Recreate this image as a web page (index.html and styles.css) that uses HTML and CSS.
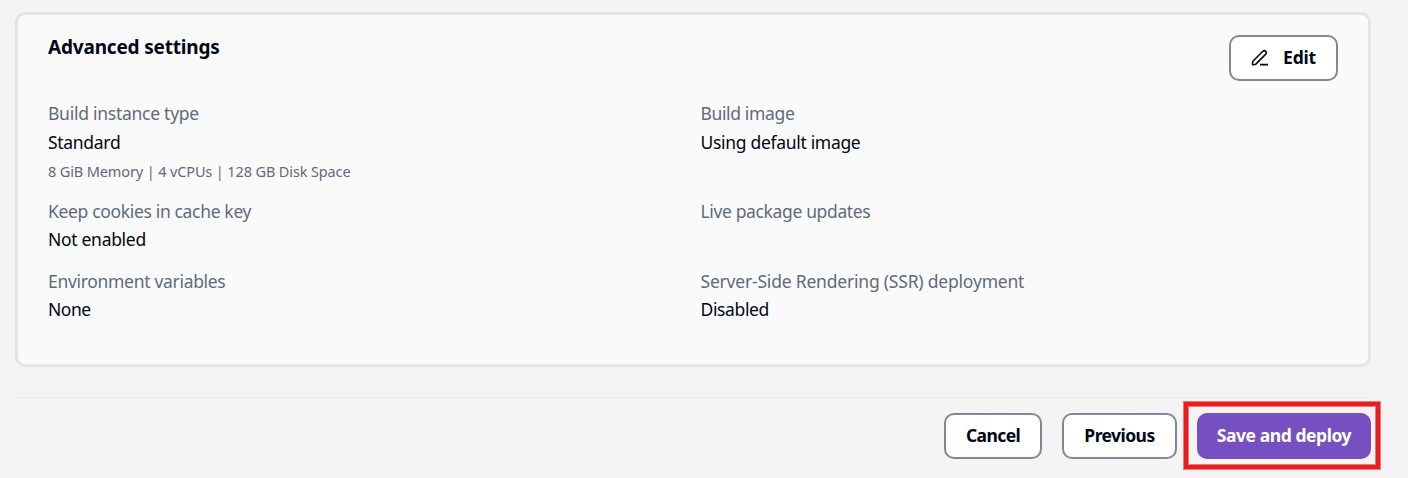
FILE: index.html
```html
<!DOCTYPE html>
<html lang="en">
<head>
<meta charset="utf-8">
<title>Review</title>
<link rel="stylesheet" href="styles.css">
</head>
<body>
<main class="page">
  <section class="card">
    <header class="card-header">
      <h2 class="title">Advanced settings</h2>
      <button class="button edit">
        <svg class="icon" width="18" height="18" viewBox="0 0 18 18" fill="none" stroke="currentColor" stroke-width="1.6" stroke-linejoin="round"><path d="M1.9 12.3 11.9 2.3q1.4-1.2 2.8 0t0 2.8L4.8 15.1q-1.4.8-3.2.5-.4-2 .3-3.3zM9 15.6h8"/></svg>
        <span class="t-edit">Edit</span>
      </button>
    </header>
    <dl class="settings">
      <div class="field first"><dt><span class="t-build">Build instance type</span></dt><dd><span class="t-standard">Standard</span></dd><dd class="detail"><span class="t-detail">8 GiB Memory | 4 vCPUs | 128 GB Disk Space</span></dd></div>
      <div class="field first"><dt><span class="t-image">Build image</span></dt><dd><span class="t-using">Using default image</span></dd></div>
      <div class="field"><dt><span class="t-cookies">Keep cookies in cache key</span></dt><dd><span class="t-not">Not enabled</span></dd></div>
      <div class="field"><dt><span class="t-live">Live package updates</span></dt></div>
      <div class="field"><dt><span class="t-env">Environment variables</span></dt><dd><span class="t-none">None</span></dd></div>
      <div class="field"><dt><span class="t-ssr">Server-Side Rendering (SSR) deployment</span></dt><dd><span class="t-disabled">Disabled</span></dd></div>
    </dl>
  </section>
  <footer class="actions">
    <button class="button cancel"><span class="t-cancel">Cancel</span></button>
    <button class="button previous"><span class="t-previous">Previous</span></button>
    <button class="button primary"><span class="t-save">Save and deploy</span></button>
  </footer>
</main>
</body>
</html>
```
FILE: styles.css
```css
* { box-sizing: border-box; }
body {
  margin: 0;
  height: 478px;
  overflow: hidden;
  background: #f4f4f4;
  color: #000716;
  font: 17.5px/28px "Noto Sans", sans-serif;
}
.page { padding: 12px 37px 0 15px; }
.card {
  height: 355px;
  padding: 20px 30px 0;
  border: 3px solid #e1e5ea;
  border-radius: 10px;
  background: #fafafa;
}
.card-header { display: flex; justify-content: space-between; align-items: flex-start; height: 64px; }
.title { margin: -2px 0 0; font-size: 19px; font-weight: 700; line-height: 28px; letter-spacing: -0.18px; }
.button {
  display: flex;
  align-items: center;
  justify-content: center;
  height: 46px;
  padding: 0 0 2px;
  border: 2px solid #7d8998;
  border-radius: 10px;
  background: #fff;
  color: #000716;
  font: 700 17.5px/28px "Noto Sans", sans-serif;
  white-space: nowrap;
}
.edit { width: 109px; gap: 14px; }
.icon { position: relative; top: 1px; }
.settings { display: grid; grid-template-columns: 1fr 1fr; column-gap: 15px; row-gap: 14px; margin: 0; }
.field { height: 56px; }
.field.first { height: 84px; }
.first dt { margin-bottom: 1px; }
dt { color: #5f6b7a; white-space: nowrap; }
dd { margin: 0; white-space: nowrap; }
.detail { padding-top: 1px; color: #5f6b7a; font-size: 14.5px; }

.t-build { letter-spacing: -0.26px; }
.t-standard { letter-spacing: -0.3px; }
.t-detail { letter-spacing: -0.13px; }
.t-image { letter-spacing: -0.36px; }
.t-using { letter-spacing: -0.31px; }
.t-cookies { letter-spacing: -0.34px; }
.t-not { letter-spacing: -0.3px; }
.t-live { letter-spacing: -0.36px; }
.t-env { letter-spacing: -0.31px; }
.t-none { letter-spacing: -0.5px; }
.t-ssr { letter-spacing: -0.2px; }
.t-disabled { letter-spacing: -0.36px; }
.t-edit { letter-spacing: -0.2px; }
.t-cancel { letter-spacing: -0.6px; }
.t-previous { letter-spacing: -0.55px; }
.t-save { letter-spacing: -0.44px; }

.actions {
  display: flex;
  justify-content: flex-end;
  gap: 20px;
  margin-top: 30px;
  padding-top: 15px;
  border-top: 1px solid #e9e9ea;
}
.cancel { width: 98px; }
.previous { width: 115px; }
.primary {
  position: relative;
  width: 174px;
  border-color: #7650c0;
  background: #7650c0;
  color: #fff;
}
.primary::after {
  content: "";
  position: absolute;
  inset: -13px -11px -12px -15px;
  border: 4px solid #e91d1d;
  box-shadow: 0 0 0 1px #ee7c7c, inset 0 0 0 1px #ee7c7c;
}
```
